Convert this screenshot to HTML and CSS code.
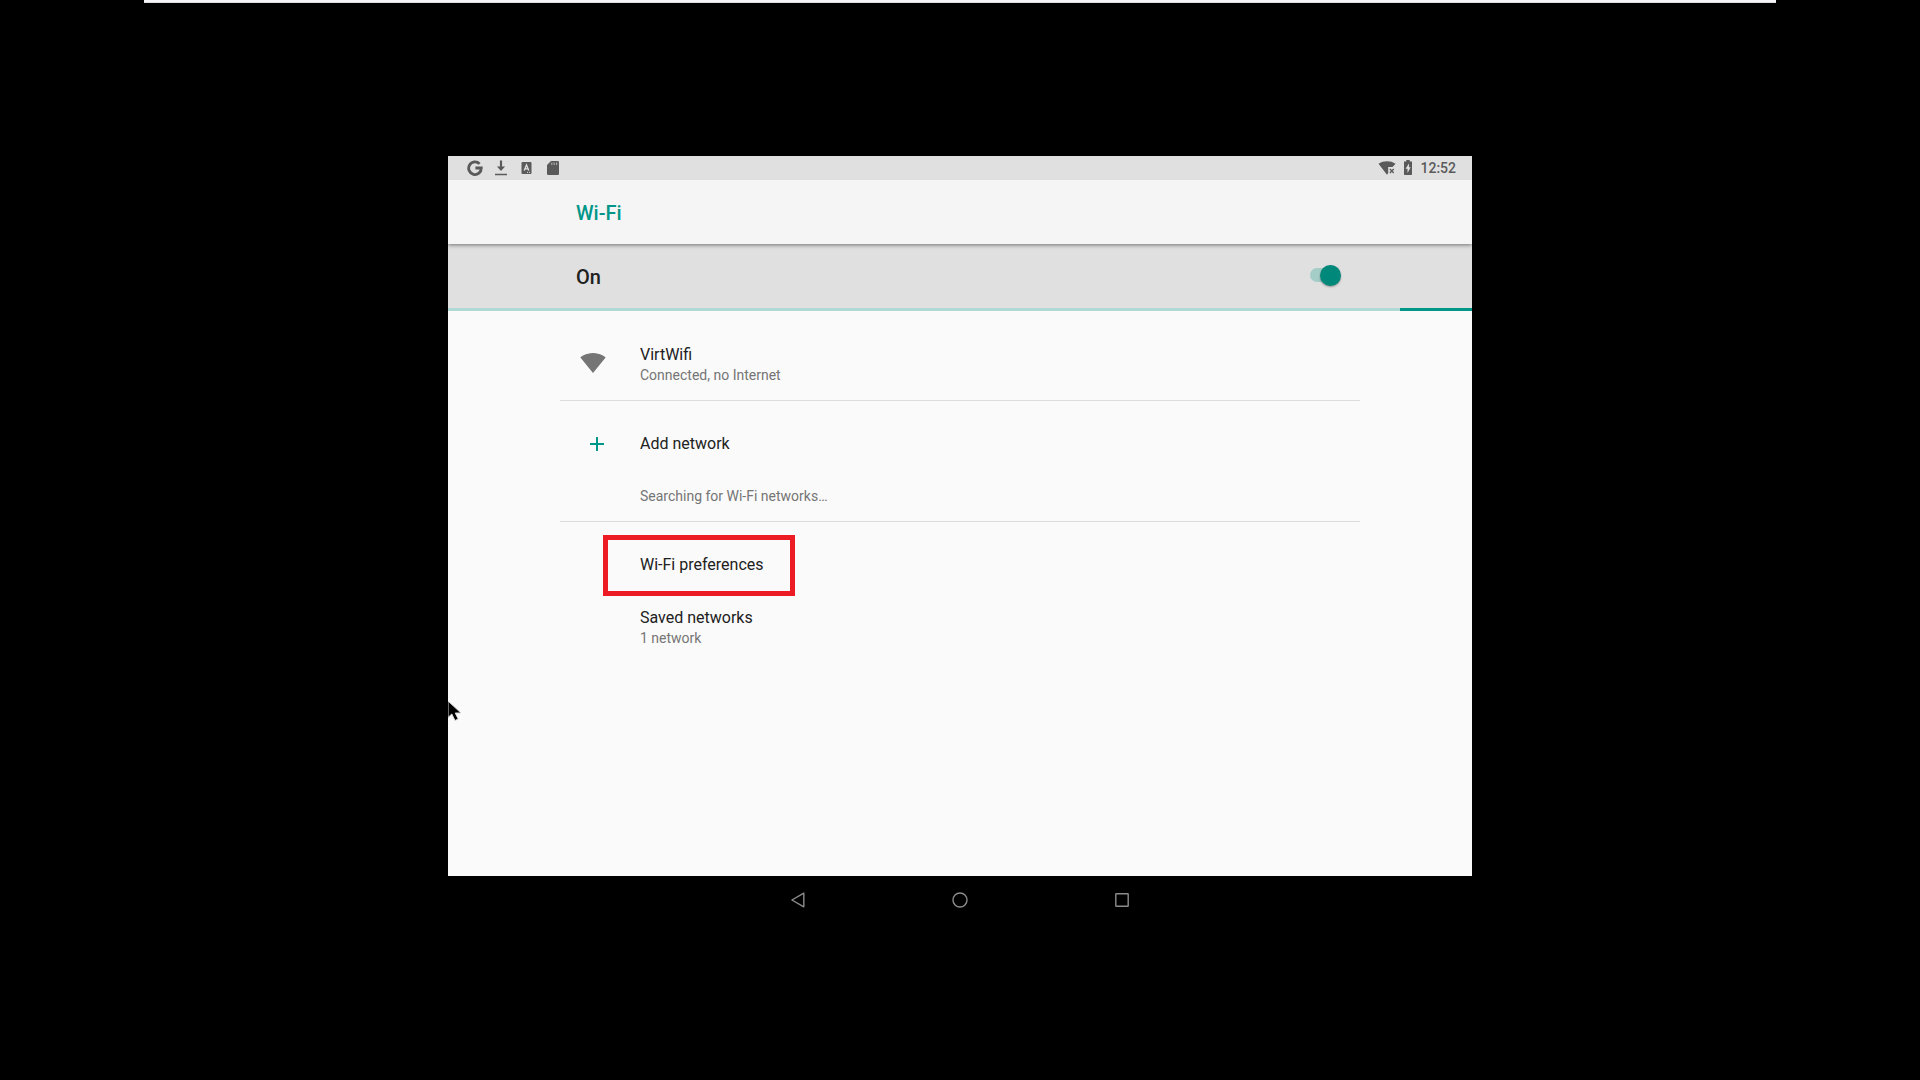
FILE: index.html
```html
<!DOCTYPE html>
<html lang="en">
<head>
    <meta charset="UTF-8">
    <meta name="viewport" content="width=device-width, initial-scale=1.0">
    <title>Wi-Fi</title>
    <link rel="stylesheet" href="styles.css">
</head>
<body>
    <div class="top-edge"></div>
    <div class="device">
        <div class="status-bar">
            <div class="status-left">
                <svg width="16" height="16" viewBox="0 0 16 16"><path d="M12.6 3.9A6.3 6.3 0 1 0 14.3 8H8.4" fill="none" stroke="currentColor" stroke-width="2.8"/></svg>
                <svg width="16" height="16" viewBox="-1 0 16 16"><path d="M5.9 .5h2.2v6h3L7 11 2.9 6.500h3zM1 13.800h12v1.500H1z" fill="currentColor"/></svg>
                <svg width="16" height="12" viewBox="-2 0 16 12"><path d="M1.500 0h8A1 1 0 0 1 10.500 1v10a1 1 0 0 1-1 1h-8a1 1 0 0 1-1-1V1a1 1 0 0 1 1-1z" fill="currentColor"/><path d="M3.200 8.500 5.500 3l2.300 5.500M4 6.800h3" fill="none" stroke="#e0e0e0" stroke-width="1.300"/><path d="M6 10.300h1M8 10.300h1" stroke="#e0e0e0"/></svg>
                <svg width="16" height="14" viewBox="-2 0 16 14"><path d="M4 0h6.800A1.200 1.200 0 0 1 12 1.200v11.600a1.200 1.200 0 0 1-1.200 1.200H1.200A1.200 1.200 0 0 1 0 12.800V4z" fill="currentColor"/><path d="M4.800 1.500v2.500M7.200 1.500v2.500M9.600 1.500v2.500" stroke="#a8a8a8" stroke-width="1.200"/></svg>
            </div>
            <div class="status-right">
                <svg width="18" height="14" viewBox="0 0 18 14"><path d="M.5 2.700C2.900 1 5.900.2 9 .2S15.100 1 17.500 2.700L14.500 6h-4.300v6L9 13.800z" fill="currentColor"/><path d="M11.900 8l3.800 4M15.700 8l-3.800 4" stroke="currentColor" stroke-width="1.300"/></svg>
                <svg width="8" height="17" viewBox="0 0 8 17"><path d="M2.300 0h3.400v1.500H8V14.300a.7.7 0 0 1-.7.700H.7a.7.700 0 0 1-.7-.700V1.500h2.300z" fill="currentColor"/><path d="M5 3.500 1.500 8.800h2v4.200l3.200-5.700H5z" fill="#e0e0e0"/></svg>
                <span class="clock">12:52</span>
            </div>
        </div>
        <header class="app-bar">
            <h1>Wi-Fi</h1>
        </header>
        <div class="switch-bar">
            <label for="wifi-toggle">On</label>
            <input type="checkbox" id="wifi-toggle" class="toggle" checked>
        </div>
        <div class="progress"><div class="progress-value"></div></div>
        <main class="content">
            <section class="group">
                <a href="#" class="row two-line">
                    <span class="row-icon signal">
                        <svg width="26" height="26" viewBox="0 2 24 24"><path d="M12.010 21.490L23.640 7c-.45-.34-4.930-4-11.640-4C5.280 3 .81 6.660.36 7l11.630 14.490.01.010.01-.010z" fill="currentColor"/></svg>
                    </span>
                    <span class="row-text">
                        <span class="title">VirtWifi</span>
                        <span class="summary">Connected, no Internet</span>
                    </span>
                </a>
            </section>
            <section class="group">
                <a href="#" class="row">
                    <span class="row-icon add">
                        <svg width="24" height="24" viewBox="0 0 24 24"><path d="M19 13h-6v6h-2v-6H5v-2h6V5h2v6h6v2z" fill="currentColor"/></svg>
                    </span>
                    <span class="title">Add network</span>
                </a>
                <div class="row note">
                    <span class="row-icon"></span>
                    <span class="summary">Searching for Wi-Fi networks…</span>
                </div>
            </section>
            <section class="group">
                <a href="#" class="row highlighted">
                    <span class="row-icon"></span>
                    <span class="title">Wi-Fi preferences</span>
                </a>
                <a href="#" class="row two-line">
                    <span class="row-icon"></span>
                    <span class="row-text">
                        <span class="title">Saved networks</span>
                        <span class="summary">1 network</span>
                    </span>
                </a>
            </section>
        </main>
        <nav class="nav-bar">
            <button type="button" aria-label="Back">
                <svg width="18" height="18" viewBox="0 0 18 18"><path d="M14.800 2.200v13.600L2.900 9z"/></svg>
            </button>
            <button type="button" aria-label="Home">
                <svg width="18" height="18" viewBox="0 0 18 18"><circle cx="9" cy="9" r="7"/></svg>
            </button>
            <button type="button" aria-label="Recent apps">
                <svg width="18" height="18" viewBox="0 0 18 18"><rect x="2.800" y="2.800" width="12.400" height="12.400" rx=".5"/></svg>
            </button>
        </nav>
        <svg class="cursor" width="16" height="24" viewBox="0 0 16 24"><path d="M0 0v16.500l3.800-3.500 3.200 6.500 3.200-1.500-3-6H13z" fill="#000" stroke="#d8d8d8"/></svg>
    </div>
</body>
</html>
```
FILE: styles.css
```css
:root {
    --accent: #009688;
    --accent-dark: #00897b;
    --bar: #e0e0e0;
    --icon: #5a5a5a;
    --text: #212121;
    --text-secondary: #757575;
}

*,
*::before,
*::after {
    box-sizing: border-box;
}

body {
    display: flex;
    flex-direction: column;
    align-items: center;
    justify-content: center;
    min-height: 100vh;
    margin: 0;
    background-color: #000;
    color: var(--text);
    font-family: Roboto, sans-serif;
}

.top-edge {
    position: absolute;
    top: 0;
    width: 85%;
    height: 3px;
    background-color: #f7f7f9;
    border-bottom: 1px solid #dcdce0;
}

.device {
    position: relative;
    display: flex;
    flex-direction: column;
    width: 100%;
    max-width: 1024px;
    min-height: 768px;
    background-color: #fafafa;
}

.status-bar {
    display: flex;
    justify-content: space-between;
    height: 24px;
    padding: 0 16px 0 19px;
    background-color: var(--bar);
    color: var(--icon);
}

.status-left,
.status-right {
    display: flex;
    align-items: center;
}

.status-left {
    gap: 10px;
}

.status-right {
    gap: 8px;
}

.clock {
    font-size: 14px;
    font-weight: 500;
}

.app-bar,
.switch-bar {
    display: flex;
    align-items: center;
    height: 64px;
    padding: 2px 128px 0;
    font-size: 20px;
    font-weight: 500;
}

.app-bar {
    position: relative;
    background-color: #f5f5f5;
    box-shadow: 0 1px 4px rgba(0, 0, 0, 0.5);
    clip-path: inset(0 0 -8px 0);
}

.app-bar h1 {
    margin: 0;
    font-size: 20px;
    font-weight: 500;
    color: var(--accent);
}

.switch-bar {
    justify-content: space-between;
    background-color: var(--bar);
}

.toggle {
    appearance: none;
    position: relative;
    width: 34px;
    height: 20px;
    margin: 0;
    cursor: pointer;
}

.toggle::before {
    content: '';
    position: absolute;
    top: 1px;
    left: 0;
    width: 28px;
    height: 14px;
    border-radius: 7px;
    background-color: #a5cdc8;
}

.toggle::after {
    content: '';
    position: absolute;
    top: -2px;
    left: 10px;
    width: 21px;
    height: 21px;
    border-radius: 50%;
    background-color: var(--accent-dark);
    box-shadow: 0 1px 2px rgba(0, 0, 0, 0.35);
}

.progress {
    height: 3px;
    background-color: #b0d8d4;
}

.progress-value {
    width: 7%;
    height: 100%;
    margin-left: auto;
    background-color: var(--accent);
}

.content {
    flex: 1;
    width: 100%;
    max-width: 800px;
    margin: 0 auto;
    padding-top: 2px;
}

.group {
    padding-top: 16px;
    border-bottom: 1px solid #dcdcdc;
}

.group:last-child {
    border-bottom: none;
}

.row {
    position: relative;
    display: flex;
    align-items: center;
    height: 54px;
    padding: 0 16px;
    color: var(--text);
    text-decoration: none;
}

.row.two-line {
    height: 71px;
    padding-top: 1px;
}

.row.note {
    height: 50px;
}

.row-icon {
    display: flex;
    flex-shrink: 0;
    width: 64px;
}

.row-icon.signal {
    padding-left: 4px;
    color: #757575;
}

.row-icon.add {
    padding-left: 9px;
    color: var(--accent);
}

.row-text {
    display: flex;
    flex-direction: column;
}

.title {
    font-size: 16px;
    line-height: 20px;
}

.summary {
    font-size: 14px;
    line-height: 20px;
    color: var(--text-secondary);
}

.highlighted::after {
    content: '';
    position: absolute;
    top: -3px;
    left: 43px;
    width: 192px;
    height: 61px;
    border: 5px solid #ed1c24;
}

.nav-bar {
    display: flex;
    justify-content: center;
    gap: 112px;
    height: 48px;
    background-color: #000;
}

.nav-bar button {
    width: 50px;
    padding: 0;
    border: none;
    background: none;
    cursor: pointer;
}

.nav-bar svg {
    display: block;
    margin: 0 auto;
    fill: none;
    stroke: #8c8c8c;
    stroke-width: 1.4;
    stroke-linejoin: round;
}

.cursor {
    position: absolute;
    top: 545px;
    left: 0;
}
```
